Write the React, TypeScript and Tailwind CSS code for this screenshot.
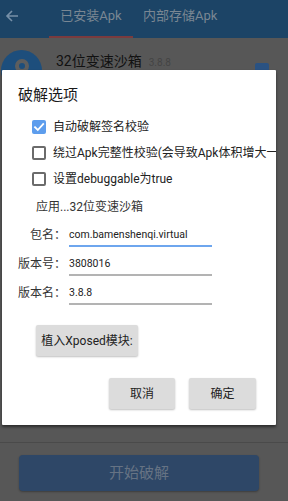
import React from 'react';

const cjk = { fontFamily: 'Roboto, "Noto Sans CJK SC", sans-serif' };

function Check({ checked }: { checked?: boolean }) {
  if (checked) {
    return (
      <div className="w-[14px] h-[14px] rounded-[2px] bg-[#5d9ded] flex items-center justify-center shrink-0">
        <svg width="12" height="12" viewBox="0 0 12 12" fill="none">
          <path d="M2 6.2 L4.8 9 L10.2 3" stroke="white" strokeWidth="1.8" strokeLinecap="square" />
        </svg>
      </div>
    );
  }
  return <div className="w-[14px] h-[14px] rounded-[2px] border-2 border-[#6b6b6b] shrink-0" />;
}

function Field({ label, value, active }: { label: string; value: string; active?: boolean }) {
  return (
    <div className="flex items-end h-[29px]">
      <div className="w-[64px] text-right text-[12px] text-[#333] pb-[3px]">{label}</div>
      <div className={`ml-[3px] w-[143px] h-[22px] flex items-end pb-[2px] text-[10.5px] text-[#222] border-b-2 ${active ? 'border-[#6ea6ee]' : 'border-[#b3b3b3]'}`}>
        {value}
      </div>
    </div>
  );
}

export default function App() {
  return (
    <div className="relative w-[288px] h-[501px] overflow-hidden bg-[#575757]" style={cjk}>
      {/* header (dimmed) */}
      <div className="h-[38px] bg-[#1c4466] flex items-stretch">
        <div className="flex items-center pb-[6px] pl-[5px]">
          <svg width="14" height="14" viewBox="0 0 14 14" fill="none">
            <path d="M13 7 H2 M7 2 L2 7 L7 12" stroke="#7790a8" strokeWidth="1.6" />
          </svg>
        </div>
        <div className="ml-[30px] w-[84px] flex items-center justify-center pb-[4px] text-[13px] text-[#7a8793] border-b-2 border-[#7a3b3e]">
          已安装Apk
        </div>
        <div className="ml-[10px] flex items-center pb-[6px] text-[13px] text-[#7a8793]">内部存储Apk</div>
      </div>
      {/* list item (dimmed) */}
      <div className="flex items-start h-[40px] pt-[12px]">
        <div className="ml-[1px] w-[41px] h-[41px] rounded-full bg-[#1d4e7c] flex items-center justify-center">
          <div className="w-[14px] h-[14px] rounded-full border-[4px] border-[#5e5e5e] bg-[#1d4e7c] -mt-[10px]" />
        </div>
        <div className="ml-[14px] mt-[1px] text-[14px] text-[#111]">32位变速沙箱</div>
        <div className="ml-[7px] mt-[5px] text-[10px] text-[#444]">3.8.8</div>
        <div className="ml-auto mr-[19px] mt-[13px] w-[14px] h-[14px] rounded-[2px] bg-[#2a5282]" />
      </div>
      {/* bottom */}
      <div className="absolute left-0 right-0 top-[442px] border-t border-[#4a4a4a]" />
      <div className="absolute left-[19px] top-[455px] w-[240px] h-[36px] rounded-[4px] bg-[#2e4767] shadow-[0_1px_2px_rgba(0,0,0,0.3)] flex items-center justify-center text-[15px] text-[#667384]">
        开始破解
      </div>

      {/* dialog */}
      <div className="absolute left-[2px] top-[70px] w-[274px] h-[355px] bg-white overflow-hidden shadow-[0_2px_3px_rgba(0,0,0,0.5)] rounded-[1px]">
        <div className="pl-[16px] pt-[14px] text-[15px] text-[#1a1a1a] leading-[22px]">破解选项</div>
        <div className="mt-[8px] pl-[30px] flex flex-col text-[12px] text-[#222]">
          <div className="h-[26px] flex items-center gap-[7px] whitespace-nowrap"><Check checked />自动破解签名校验</div>
          <div className="h-[26px] flex items-center gap-[7px] whitespace-nowrap"><Check />绕过Apk完整性校验(会导致Apk体积增大一倍)</div>
          <div className="h-[26px] flex items-center gap-[7px] whitespace-nowrap"><Check />设置debuggable为true</div>
        </div>
        <div className="mt-[6px] pl-[34px] h-[18px] leading-[18px] text-[12px] text-[#333]">应用...32位变速沙箱</div>
        <div className="mt-[2px] flex flex-col">
          <Field label="包名：" value="com.bamenshenqi.virtual" active />
          <Field label="版本号：" value="3808016" />
          <Field label="版本名：" value="3.8.8" />
        </div>
        <div className="mt-[20px] ml-[34px] w-[102px] h-[31px] rounded-[2px] bg-[#dcdcdc] shadow-[0_1px_2px_rgba(0,0,0,0.25)] flex items-center justify-center text-[12px] text-[#222]">
          植入Xposed模块:
        </div>
        <div className="mt-[22px] flex justify-end gap-[14px] pr-[20px]">
          <div className="w-[66px] h-[31px] rounded-[2px] bg-[#dcdcdc] shadow-[0_1px_2px_rgba(0,0,0,0.25)] flex items-center justify-center text-[12px] text-[#222]">取消</div>
          <div className="w-[67px] h-[31px] rounded-[2px] bg-[#dcdcdc] shadow-[0_1px_2px_rgba(0,0,0,0.25)] flex items-center justify-center text-[12px] text-[#222]">确定</div>
        </div>
      </div>
    </div>
  );
}
